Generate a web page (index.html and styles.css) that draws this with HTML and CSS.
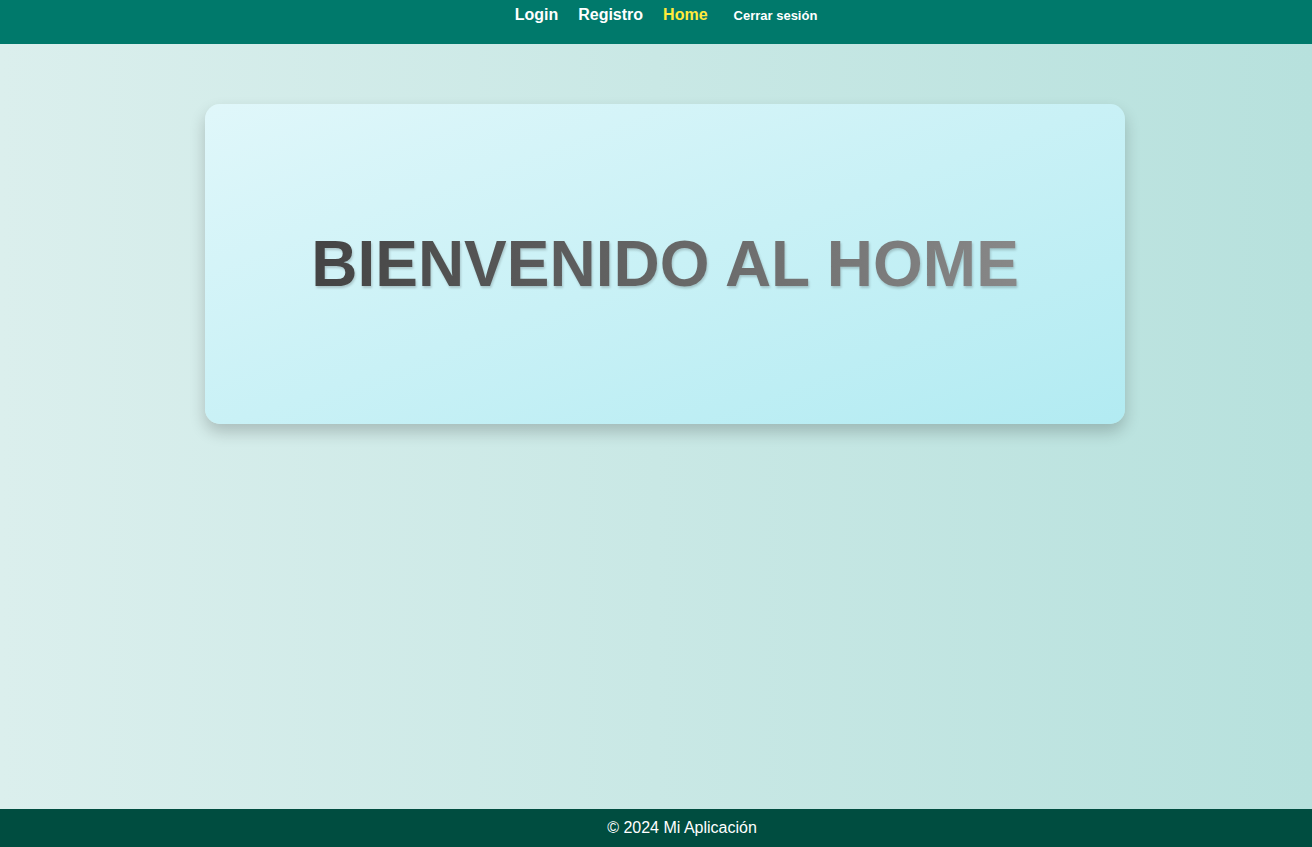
FILE: index.html
```html
<!DOCTYPE html>
<html lang="es">
<head>
<meta charset="utf-8">
<title>Home</title>
<link rel="stylesheet" href="styles.css">
</head>
<body>
<nav class="navbar">
  <a class="nav-link" href="#">Login</a>
  <a class="nav-link" href="#">Registro</a>
  <a class="nav-link active" href="#">Home</a>
  <button class="logout" type="button">Cerrar sesión</button>
</nav>
<main class="main">
  <section class="card">
    <h1 class="title">BIENVENIDO AL HOME</h1>
  </section>
</main>
<footer class="footer">© 2024 Mi Aplicación</footer>
</body>
</html>
```

FILE: styles.css
```css
* { box-sizing: border-box; }
html, body { height: 100%; }
body {
  margin: 0;
  font-family: "Liberation Sans", Arial, sans-serif;
  background: linear-gradient(to right, #dbefed, #b7e1dd);
  display: flex;
  flex-direction: column;
  min-height: 100vh;
}
.navbar {
  height: 44px;
  background: #00796b;
  display: flex;
  justify-content: center;
  align-items: baseline;
  gap: 20px;
  padding: 6px 0 0 26px;
}
.nav-link {
  color: #ffffff;
  text-decoration: none;
  font-weight: bold;
  font-size: 16px;
}
.nav-link.active { color: #ffeb3b; }
.logout {
  background: none;
  border: none;
  color: #ffffff;
  font-family: "Liberation Sans", Arial, sans-serif;
  font-weight: bold;
  font-size: 13px;
  padding: 0 6px;
  cursor: pointer;
}
.main {
  flex: 1;
  padding: 60px 0 0 18px;
}
.card {
  width: 920px;
  height: 320px;
  margin: 0 auto;
  border-radius: 15px;
  background: linear-gradient(160deg, #e0f7fa, #b2ebf2);
  box-shadow: 0 8px 16px rgba(0, 0, 0, 0.2);
  display: flex;
  align-items: center;
  justify-content: center;
}
.title {
  margin: 0;
  font-size: 64px;
  font-weight: bold;
  background: linear-gradient(to right, #444444, #888888);
  -webkit-background-clip: text;
  background-clip: text;
  color: transparent;
  filter: drop-shadow(1px 2px 1px rgba(0, 0, 0, 0.18));
}
.footer {
  height: 38px;
  background: #004d40;
  color: #ffffff;
  font-size: 16px;
  text-align: center;
  padding: 10px 0 0 52px;
}
```
